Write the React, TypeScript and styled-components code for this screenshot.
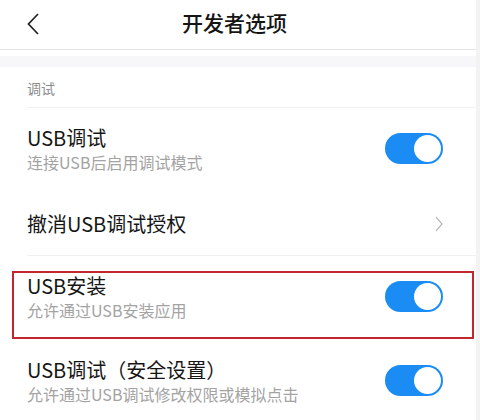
import React from "react";
import styled, { createGlobalStyle } from "styled-components";

const Global = createGlobalStyle`
  html, body { margin: 0; padding: 0; background: #f3f3f4; }
  body { font-family: "Noto Sans CJK SC", "Noto Sans", sans-serif; }
  * { box-sizing: border-box; }
`;

const Page = styled.div`
  width: 476px;
  height: 420px;
  background: #ffffff;
  overflow: hidden;
`;

const Header = styled.header`
  height: 50px;
  display: flex;
  align-items: center;
  padding-left: 27px;
  border-bottom: 1px solid #e4e4e4;
`;

const BackButton = styled.div`
  width: 12px;
  height: 22px;
  display: flex;
  margin-top: -1px;
`;

const Title = styled.h1`
  flex: 1;
  margin: 0;
  text-align: center;
  font-size: 21px;
  font-weight: 500;
  color: #141414;
  line-height: 28px;
  margin-top: -6px;
`;

const Spacer = styled.div`
  width: 46px;
`;

const Band = styled.div`
  margin-top: 6px;
  height: 11px;
  background: #f7f6f9;
`;

const SectionLabel = styled.div`
  height: 41px;
  margin-left: 27px;
  display: flex;
  align-items: center;
  padding-top: 2px;
  font-size: 14px;
  color: #8c8c8c;
  border-bottom: 1px solid #f2f2f2;
`;

const Row = styled.div<{ $h: number; $divider?: boolean }>`
  position: relative;
  height: ${(p) => p.$h}px;
  margin-left: 27px;
  padding-right: 33px;
  display: flex;
  align-items: center;
  justify-content: space-between;
  border-bottom: 1px solid ${(p) => (p.$divider ? "#f0f0f0" : "transparent")};
`;

const TextBlock = styled.div`
  display: flex;
  flex-direction: column;
  gap: 1px;
`;

const RowTitle = styled.div`
  font-size: 20px;
  line-height: 24px;
  color: #161616;
`;

const RowSub = styled.div`
  font-size: 16px;
  line-height: 22px;
  color: #a3a3a3;
`;

const Toggle = styled.div`
  width: 58px;
  height: 31px;
  border-radius: 16px;
  background: #1a8cf4;
  display: flex;
  align-items: center;
  justify-content: flex-end;
  padding-right: 2px;
  margin-top: -3px;
`;

const Knob = styled.div`
  width: 27px;
  height: 27px;
  border-radius: 50%;
  background: #ffffff;
`;

const Highlight = styled.div`
  position: absolute;
  left: -15px;
  top: 15px;
  right: 2px;
  bottom: 0;
  border: 2px solid #c1272d;
  pointer-events: none;
`;

const Chevron = styled.div`
  display: flex;
  margin-right: 0;
`;

function Switch() {
  return (
    <Toggle>
      <Knob />
    </Toggle>
  );
}

export default function App() {
  return (
    <>
      <Global />
      <Page>
        <Header>
          <BackButton>
            <svg width="12" height="22" viewBox="0 0 12 22">
              <path d="M11 1 L1.5 11 L11 21" fill="none" stroke="#222" strokeWidth="1.7" />
            </svg>
          </BackButton>
          <Title>开发者选项</Title>
          <Spacer />
        </Header>
        <Band />
        <SectionLabel>调试</SectionLabel>
        <Row $h={84}>
          <TextBlock>
            <RowTitle>USB调试</RowTitle>
            <RowSub>连接USB后启用调试模式</RowSub>
          </TextBlock>
          <Switch />
        </Row>
        <Row $h={64} $divider>
          <RowTitle>撤消USB调试授权</RowTitle>
          <Chevron>
            <svg width="8" height="16" viewBox="0 0 8 16">
              <path d="M1 1 L7 8 L1 15" fill="none" stroke="#b8b8b8" strokeWidth="1.2" />
            </svg>
          </Chevron>
        </Row>
        <Row $h={84}>
          <TextBlock>
            <RowTitle>USB安装</RowTitle>
            <RowSub>允许通过USB安装应用</RowSub>
          </TextBlock>
          <Switch />
          <Highlight />
        </Row>
        <Row $h={84}>
          <TextBlock>
            <RowTitle>USB调试（安全设置）</RowTitle>
            <RowSub>允许通过USB调试修改权限或模拟点击</RowSub>
          </TextBlock>
          <Switch />
        </Row>
      </Page>
    </>
  );
}
